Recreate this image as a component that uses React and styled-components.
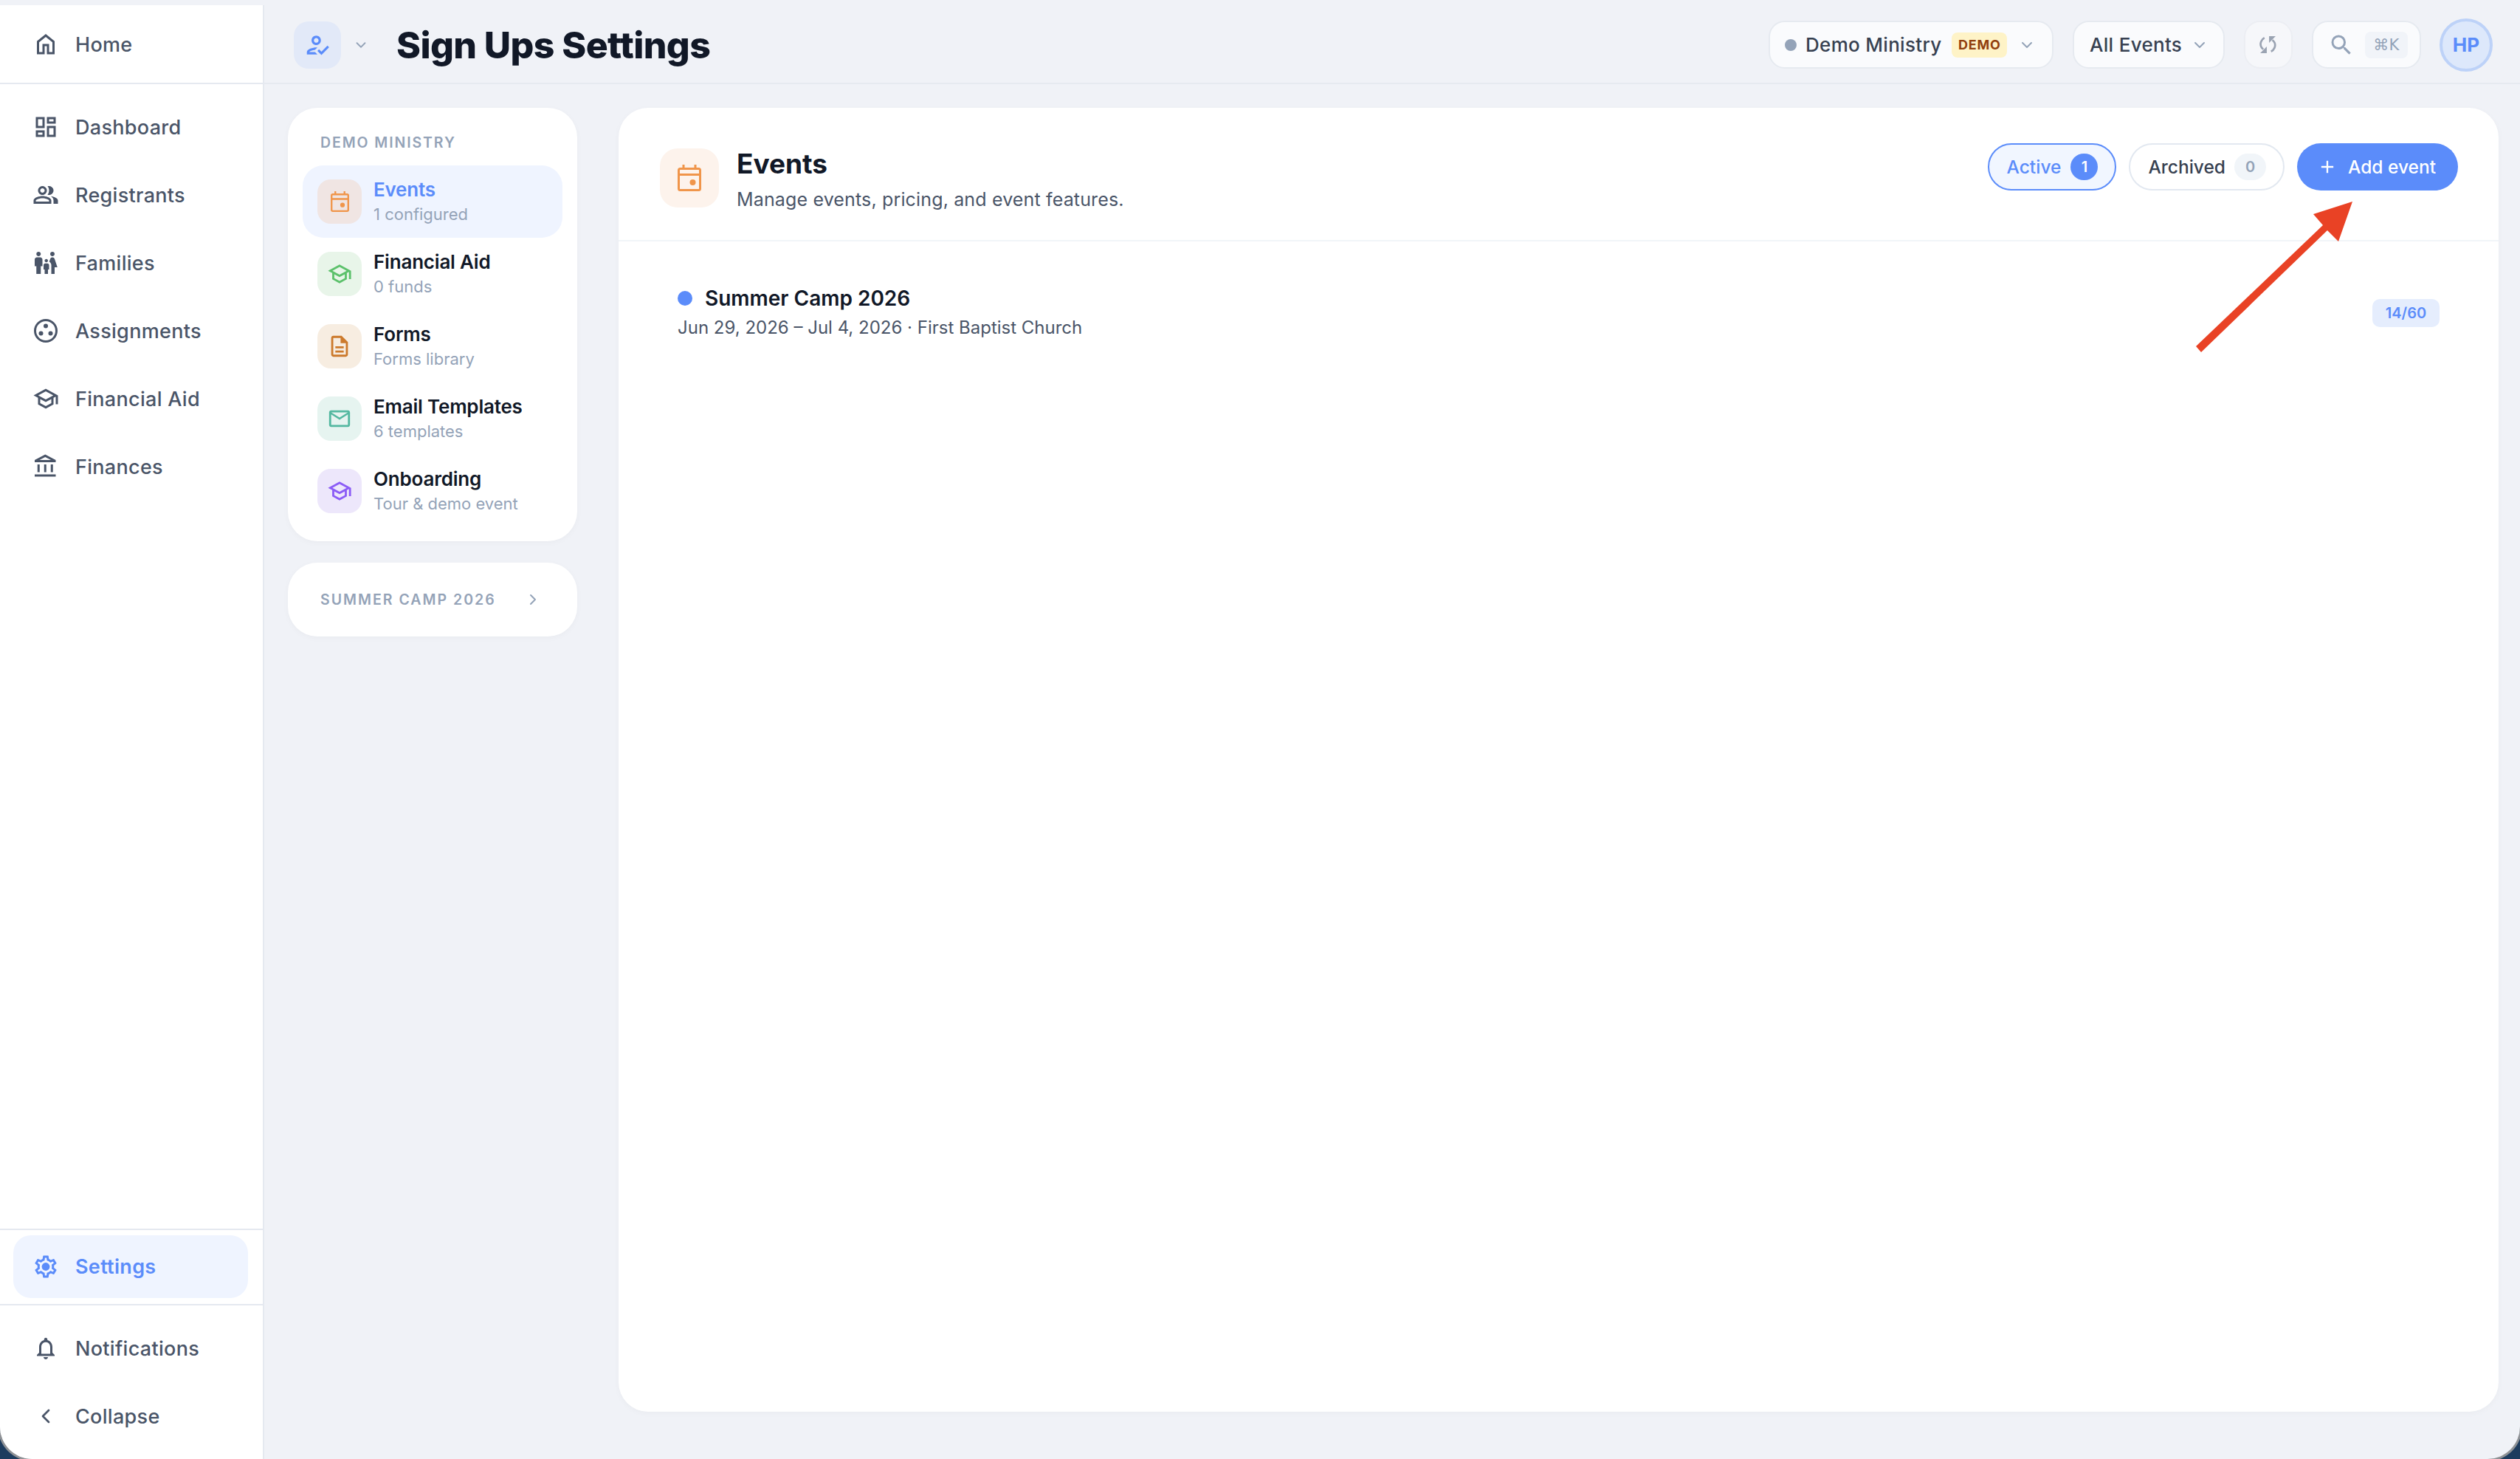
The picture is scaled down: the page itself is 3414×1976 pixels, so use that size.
import React from "react";
import styled, { createGlobalStyle } from "styled-components";
import {
  MdOutlineDashboard,
  MdOutlinePeopleAlt,
  MdFamilyRestroom,
  MdOutlineSchool,
  MdOutlineAccountBalance,
  MdOutlineNotifications,
  MdOutlineHowToReg,
  MdOutlineDescription,
  MdMailOutline,
  MdSearch,
  MdAdd,
} from "react-icons/md";
import { ChevronDown, ChevronLeft, ChevronRight } from "lucide-react";

const GlobalStyle = createGlobalStyle`
  html, body { margin: 0; padding: 0; background: #1d3c5e; }
  body { font-family: "Inter", "Liberation Sans", sans-serif; }
  * { box-sizing: border-box; }
`;

const Window = styled.div`
  position: relative;
  display: flex;
  width: 3414px;
  height: 1976px;
  overflow: hidden;
  background: #f0f2f7;
  border-radius: 0 0 44px 44px;
  box-shadow: 0 0 0 3px #8f9296;
`;

const Sidebar = styled.aside`
  display: flex;
  flex-direction: column;
  flex: 0 0 358px;
  margin-top: 7px;
  background: #fff;
  border-right: 2px solid #e5e9f0;
`;

const HomeSection = styled.div`
  display: flex;
  align-items: center;
  flex: 0 0 107px;
  padding-top: 1px;
  border-bottom: 2px solid #e5e9f0;
`;

const NavGroup = styled.nav`
  display: flex;
  flex-direction: column;
  padding: 12px 0 ${(p) => (p.$grow ? 0 : 12)}px;
  flex: ${(p) => (p.$grow ? 1 : "none")};
`;

const NavItem = styled.div`
  display: flex;
  align-items: center;
  gap: 22px;
  height: 92px;
  width: 100%;
  padding-left: 44px;
  color: #4a5568;
  font-size: 27px;
  font-weight: 500;
  letter-spacing: 0.3px;
  svg { display: block; }
`;

const NavIcon = styled.span`
  display: flex;
  align-items: center;
  justify-content: center;
  width: 36px;
  height: 36px;
  flex: none;
`;

const SettingsSection = styled.div`
  padding: 7px 20px 8px 18px;
  border-top: 2px solid #e5e9f0;
  border-bottom: 2px solid #e5e9f0;
`;

const SettingsItem = styled(NavItem)`
  height: 85px;
  padding-left: 26px;
  background: #eff4ff;
  border-radius: 24px;
  color: #5b8cfa;
  font-weight: 600;
`;

const Main = styled.div`
  display: flex;
  flex-direction: column;
  flex: 1;
  min-width: 0;
`;

const Topbar = styled.header`
  display: flex;
  align-items: center;
  height: 114px;
  flex: none;
  padding: 9px 37px 0 40px;
  border-bottom: 2px solid #e6eaf0;
`;

const ProductButton = styled.div`
  display: flex;
  align-items: center;
  justify-content: center;
  width: 64px;
  height: 64px;
  background: #e2e9f8;
  border-radius: 20px;
  color: #5b8cfa;
`;

const TopChevron = styled.span`
  display: flex;
  margin: 0 ${(p) => p.$right || 0}px 0 ${(p) => p.$left || 0}px;
  color: #94a3b8;
`;

const PageTitle = styled.h1`
  margin: 0;
  font-size: 50px;
  font-weight: 800;
  line-height: 60px;
  letter-spacing: -0.6px;
  color: #111827;
`;

const TopActions = styled.div`
  display: flex;
  align-items: center;
  margin-left: auto;
`;

const TopPill = styled.div`
  display: flex;
  align-items: center;
  height: 65px;
  width: ${(p) => p.$width}px;
  margin-right: ${(p) => p.$gap}px;
  padding-left: ${(p) => p.$pad}px;
  background: ${(p) => p.$bg || "#fafbfd"};
  border: 2px solid ${(p) => p.$line || "#e6eaf0"};
  border-radius: 22px;
  font-size: 26px;
  font-weight: 500;
  letter-spacing: 0.3px;
  color: #374151;
  white-space: nowrap;
`;

const StatusDot = styled.span`
  width: 16px;
  height: 16px;
  margin-right: 12px;
  border-radius: 50%;
  background: #94a3b8;
`;

const DemoBadge = styled.span`
  display: flex;
  align-items: center;
  justify-content: center;
  width: 75px;
  height: 34px;
  margin: 0 15px 0 14px;
  background: #fef3c7;
  border-radius: 8px;
  color: #92400e;
  font-size: 18px;
  font-weight: 700;
  letter-spacing: 0.8px;
`;

const Kbd = styled.span`
  display: flex;
  align-items: center;
  justify-content: center;
  width: 58px;
  height: 36px;
  margin-left: 14px;
  background: #f1f4f9;
  border-radius: 8px;
  color: #94a3b8;
  font-family: "DejaVu Sans", "Inter", sans-serif;
  font-size: 21px;
  font-weight: 400;
`;

const Avatar = styled.div`
  display: flex;
  align-items: center;
  justify-content: center;
  width: 72px;
  height: 72px;
  background: #dde8fb;
  border: 4px solid #bdd2f8;
  border-radius: 50%;
  color: #5b8cfa;
  font-size: 26px;
  font-weight: 700;
`;

const Body = styled.div`
  display: flex;
  align-items: stretch;
  flex: 1;
  min-height: 0;
  padding: 32px 29px 64px 32px;
  gap: 56px;
`;

const SettingsColumn = styled.div`
  display: flex;
  flex-direction: column;
  flex: 0 0 392px;
  gap: 29px;
`;

const Card = styled.div`
  background: #fff;
  border-radius: 40px;
  box-shadow: 0 2px 8px rgba(15, 23, 42, 0.03);
`;

const MenuCard = styled(Card)`
  padding: 33px 20px 19px;
`;

const MenuLabel = styled.div`
  height: 28px;
  margin: 0 0 17px 24px;
  color: #94a3b8;
  font-size: 19.5px;
  font-weight: 600;
  line-height: 28px;
  letter-spacing: 1.9px;
`;

const MenuItem = styled.div`
  display: flex;
  align-items: center;
  gap: 16px;
  height: 98px;
  padding-left: 20px;
  border-radius: 28px;
  background: ${(p) => (p.$active ? "#eff4ff" : "transparent")};
`;

const MenuIcon = styled.div`
  display: flex;
  align-items: center;
  justify-content: center;
  flex: none;
  width: 60px;
  height: 60px;
  border-radius: 18px;
  background: ${(p) => p.$bg};
  color: ${(p) => p.$color};
`;

const MenuTitle = styled.div`
  font-size: 26px;
  font-weight: 600;
  line-height: 32px;
  letter-spacing: -0.2px;
  color: ${(p) => (p.$active ? "#5b8cfa" : "#111827")};
`;

const MenuSub = styled.div`
  margin-top: 2px;
  font-size: 22px;
  line-height: 30px;
  color: #94a3b8;
`;

const CampCard = styled(Card)`
  display: flex;
  align-items: center;
  height: 100px;
  padding-left: 44px;
  color: #94a3b8;
`;

const CampLabel = styled.div`
  font-size: 19.5px;
  font-weight: 600;
  letter-spacing: 2px;
  margin-right: 38px;
  white-space: nowrap;
`;

const ContentCard = styled(Card)`
  flex: 1;
  min-width: 0;
`;

const ContentHeader = styled.div`
  display: flex;
  align-items: flex-start;
  justify-content: space-between;
  height: 181px;
  padding: 48px 55px 0 56px;
  border-bottom: 2px solid #f1f5f9;
`;

const HeaderLeft = styled.div`
  display: flex;
  gap: 24px;
  margin-top: 6px;
`;

const HeaderIcon = styled.div`
  display: flex;
  align-items: center;
  justify-content: center;
  width: 80px;
  height: 80px;
  margin-top: 1px;
  background: #fdf3ec;
  border-radius: 24px;
  color: #f0954a;
`;

const HeaderTitle = styled.h2`
  margin: 0;
  font-size: 37px;
  font-weight: 700;
  line-height: 44px;
  color: #111827;
`;

const HeaderSub = styled.p`
  margin: 9px 0 0;
  font-size: 25px;
  line-height: 34px;
  letter-spacing: 0.15px;
  color: #4a5568;
`;

const HeaderActions = styled.div`
  display: flex;
  gap: 17px;
`;

const FilterPill = styled.div`
  display: flex;
  align-items: center;
  gap: ${(p) => (p.$active ? 13 : 12)}px;
  height: 64px;
  padding: 0 23px 0 24px;
  border: 2px solid ${(p) => (p.$active ? "#5b8cfa" : "#e2e8f0")};
  background: ${(p) => (p.$active ? "#f1f6ff" : "#fff")};
  border-radius: 32px;
  color: ${(p) => (p.$active ? "#5b8cfa" : "#374151")};
  font-size: 24.5px;
  font-weight: 500;
`;

const CountBadge = styled.span`
  display: flex;
  align-items: center;
  justify-content: center;
  min-width: ${(p) => (p.$active ? 37 : 43)}px;
  height: 36px;
  border-radius: 18px;
  background: ${(p) => (p.$active ? "#5b8cfa" : "#f1f5f9")};
  color: ${(p) => (p.$active ? "#fff" : "#94a3b8")};
  font-size: 20px;
  font-weight: 600;
`;

const AddButton = styled.div`
  display: flex;
  align-items: center;
  gap: 14px;
  height: 64px;
  padding: 0 30px 0 27px;
  background: #5b8cfa;
  border-radius: 32px;
  color: #fff;
  font-size: 24.5px;
  font-weight: 500;
`;

const EventRow = styled.div`
  display: flex;
  align-items: center;
  justify-content: space-between;
  padding: 59px 80px 0;
`;

const EventTitleLine = styled.div`
  display: flex;
  align-items: center;
  gap: 17px;
  height: 36px;
  color: #111827;
  font-size: 28px;
  font-weight: 600;
  line-height: 36px;
`;

const EventDot = styled.span`
  width: 20px;
  height: 20px;
  border-radius: 50%;
  background: #5b8cfa;
`;

const EventMeta = styled.div`
  margin-top: 5px;
  color: #4a5568;
  font-size: 24px;
  line-height: 34px;
`;

const CapacityBadge = styled.div`
  display: flex;
  align-items: center;
  justify-content: center;
  width: 91px;
  height: 38px;
  background: #e5edfd;
  border-radius: 10px;
  color: #5b8cfa;
  font-size: 20px;
  font-weight: 600;
`;

const ArrowOverlay = styled.svg`
  position: absolute;
  left: 2970px;
  top: 268px;
  pointer-events: none;
`;

const HomeIcon = () => (
  <svg width="24" height="28" viewBox="0 0 24 28" fill="none" stroke="currentColor" strokeWidth="3">
    <path d="M1.5 10.5 12 2l10.5 8.5V26H15V15H9v11H1.5z" />
  </svg>
);

const AssignmentsIcon = () => (
  <svg width="34" height="34" viewBox="0 0 34 34" fill="currentColor">
    <circle cx="17" cy="17" r="14.5" fill="none" stroke="currentColor" strokeWidth="3" />
    <circle cx="17" cy="10.5" r="3" />
    <circle cx="10.5" cy="20.5" r="3" />
    <circle cx="23.5" cy="20.5" r="3" />
  </svg>
);

const GearIcon = () => (
  <svg width="37" height="37" viewBox="0 0 24 24" fill="currentColor">
    <path d="M19.43 12.98c.04-.32.07-.64.07-.98 0-.34-.03-.66-.07-.98l2.11-1.65c.19-.15.24-.42.12-.64l-2-3.46c-.09-.16-.26-.25-.44-.25-.06 0-.12.01-.17.03l-2.49 1c-.52-.4-1.08-.73-1.69-.98l-.38-2.65C14.46 2.18 14.25 2 14 2h-4c-.25 0-.46.18-.49.42l-.38 2.65c-.61.25-1.17.59-1.69.98l-2.49-1c-.06-.02-.12-.03-.18-.03-.17 0-.34.09-.43.25l-2 3.46c-.13.22-.07.49.12.64l2.11 1.65c-.04.32-.07.65-.07.98 0 .33.03.66.07.98l-2.11 1.65c-.19.15-.24.42-.12.64l2 3.46c.09.16.26.25.44.25.06 0 .12-.01.17-.03l2.49-1c.52.4 1.08.73 1.69.98l.38 2.65c.03.24.24.42.49.42h4c.25 0 .46-.18.49-.42l.38-2.65c.61-.25 1.17-.59 1.69-.98l2.49 1c.06.02.12.03.18.03.17 0 .34-.09.43-.25l2-3.46c.12-.22.07-.49-.12-.64l-2.11-1.65zm-1.98-1.71c.04.31.05.52.05.73 0 .21-.02.43-.05.73l-.14 1.13.89.7 1.08.84-.7 1.21-1.27-.51-1.04-.42-.9.68c-.43.32-.84.56-1.25.73l-1.06.43-.16 1.13-.2 1.35h-1.4l-.19-1.35-.16-1.13-1.06-.43c-.43-.18-.83-.41-1.23-.71l-.91-.7-1.06.43-1.27.51-.7-1.21 1.08-.84.89-.7-.14-1.13c-.03-.31-.05-.54-.05-.74s.02-.43.05-.73l.14-1.13-.89-.7-1.08-.84.7-1.21 1.27.51 1.04.42.9-.68c.43-.32.84-.56 1.25-.73l1.06-.43.16-1.13.2-1.35h1.39l.19 1.35.16 1.13 1.06.43c.43.18.83.41 1.23.71l.91.7 1.06-.43 1.27-.51.7 1.21-1.07.85-.89.7.14 1.13z" />
    <circle cx="12" cy="12" r="3.6" />
  </svg>
);

const CalendarIcon = ({ width, height }) => (
  <svg width={width} height={height} viewBox="0 0 32 36" fill="none" stroke="currentColor" strokeWidth="3">
    <rect x="1.5" y="5.5" width="29" height="29" rx="2" />
    <path d="M1.5 13.5h29M8 0v6M24 0v6" />
    <circle cx="20.5" cy="24" r="4" fill="currentColor" stroke="none" />
  </svg>
);

const SyncIcon = () => (
  <svg width="23" height="23" viewBox="0 0 22 22" fill="none" stroke="#9aa3b2" strokeWidth="2.6">
    <path d="M6.5 2.2C2.4 4.2.3 9.5 2.2 13.6c.6 1.4 1.6 2.5 2.8 3.4M15 19.8c4.2-1.9 6.5-7.2 4.6-11.4-.6-1.4-1.6-2.5-2.8-3.4" />
    <path d="M1 22h8.5v-8.5zM12.5 0H21l-8.5 8.5z" fill="#9aa3b2" stroke="none" />
  </svg>
);

const navItems = [
  { label: "Dashboard", icon: <MdOutlineDashboard size={38} /> },
  { label: "Registrants", icon: <MdOutlinePeopleAlt size={38} /> },
  { label: "Families", icon: <MdFamilyRestroom size={38} /> },
  { label: "Assignments", icon: <AssignmentsIcon /> },
  { label: "Financial Aid", icon: <MdOutlineSchool size={38} /> },
  { label: "Finances", icon: <MdOutlineAccountBalance size={38} /> },
];

const menuItems = [
  { title: "Events", sub: "1 configured", bg: "#f0e5e3", color: "#f0954a", active: true, icon: <CalendarIcon width={25} height={28} /> },
  { title: "Financial Aid", sub: "0 funds", bg: "#e8f5e9", color: "#5cc16b", icon: <MdOutlineSchool size={34} /> },
  { title: "Forms", sub: "Forms library", bg: "#f7ede1", color: "#cc7a2c", icon: <MdOutlineDescription size={34} /> },
  { title: "Email Templates", sub: "6 templates", bg: "#e6f4f0", color: "#53b8a0", icon: <MdMailOutline size={34} /> },
  { title: "Onboarding", sub: "Tour & demo event", bg: "#ede7fb", color: "#8b5cf6", icon: <MdOutlineSchool size={34} /> },
];

export default function App() {
  return (
    <Window>
      <GlobalStyle />
      <Sidebar>
        <HomeSection>
          <NavItem>
            <NavIcon><HomeIcon /></NavIcon>
            Home
          </NavItem>
        </HomeSection>
        <NavGroup $grow>
          {navItems.map((item) => (
            <NavItem key={item.label}>
              <NavIcon>{item.icon}</NavIcon>
              {item.label}
            </NavItem>
          ))}
        </NavGroup>
        <SettingsSection>
          <SettingsItem>
            <NavIcon><GearIcon /></NavIcon>
            Settings
          </SettingsItem>
        </SettingsSection>
        <NavGroup>
          <NavItem>
            <NavIcon><MdOutlineNotifications size={38} /></NavIcon>
            Notifications
          </NavItem>
          <NavItem>
            <NavIcon><ChevronLeft size={32} /></NavIcon>
            Collapse
          </NavItem>
        </NavGroup>
      </Sidebar>

      <Main>
        <Topbar>
          <ProductButton><MdOutlineHowToReg size={38} /></ProductButton>
          <TopChevron $left={16} $right={37}><ChevronDown size={22} /></TopChevron>
          <PageTitle>Sign Ups Settings</PageTitle>
          <TopActions>
            <TopPill $width={386} $gap={26} $pad={20}>
              <StatusDot />
              Demo Ministry
              <DemoBadge>DEMO</DemoBadge>
              <TopChevron><ChevronDown size={24} /></TopChevron>
            </TopPill>
            <TopPill $width={206} $gap={26} $pad={21}>
              All Events
              <TopChevron $left={12}><ChevronDown size={24} /></TopChevron>
            </TopPill>
            <TopPill $width={66} $gap={26} $pad={19} $bg="#f6f7fa" $line="#eceef3">
              <SyncIcon />
            </TopPill>
            <TopPill $width={148} $gap={25} $pad={20}>
              <MdSearch size={36} color="#94a3b8" />
              <Kbd>⌘K</Kbd>
            </TopPill>
            <Avatar>HP</Avatar>
          </TopActions>
        </Topbar>

        <Body>
          <SettingsColumn>
            <MenuCard>
              <MenuLabel>DEMO MINISTRY</MenuLabel>
              {menuItems.map((item) => (
                <MenuItem key={item.title} $active={item.active}>
                  <MenuIcon $bg={item.bg} $color={item.color}>{item.icon}</MenuIcon>
                  <div>
                    <MenuTitle $active={item.active}>{item.title}</MenuTitle>
                    <MenuSub>{item.sub}</MenuSub>
                  </div>
                </MenuItem>
              ))}
            </MenuCard>
            <CampCard>
              <CampLabel>SUMMER CAMP 2026</CampLabel>
              <ChevronRight size={24} />
            </CampCard>
          </SettingsColumn>

          <ContentCard>
            <ContentHeader>
              <HeaderLeft>
                <HeaderIcon><CalendarIcon width={32} height={36} /></HeaderIcon>
                <div>
                  <HeaderTitle>Events</HeaderTitle>
                  <HeaderSub>Manage events, pricing, and event features.</HeaderSub>
                </div>
              </HeaderLeft>
              <HeaderActions>
                <FilterPill $active>
                  Active
                  <CountBadge $active>1</CountBadge>
                </FilterPill>
                <FilterPill>
                  Archived
                  <CountBadge>0</CountBadge>
                </FilterPill>
                <AddButton>
                  <MdAdd size={28} />
                  Add event
                </AddButton>
              </HeaderActions>
            </ContentHeader>
            <EventRow>
              <div>
                <EventTitleLine>
                  <EventDot />
                  Summer Camp 2026
                </EventTitleLine>
                <EventMeta>Jun 29, 2026 – Jul 4, 2026 · First Baptist Church</EventMeta>
              </div>
              <CapacityBadge>14/60</CapacityBadge>
            </EventRow>
          </ContentCard>
        </Body>
      </Main>

      <ArrowOverlay width="225" height="215" viewBox="2970 268 225 215">
        <polygon points="3187,273 3134,290 3147,305 2975,469 2982,477 3153,312 3168,327" fill="#e94225" />
      </ArrowOverlay>
    </Window>
  );
}
